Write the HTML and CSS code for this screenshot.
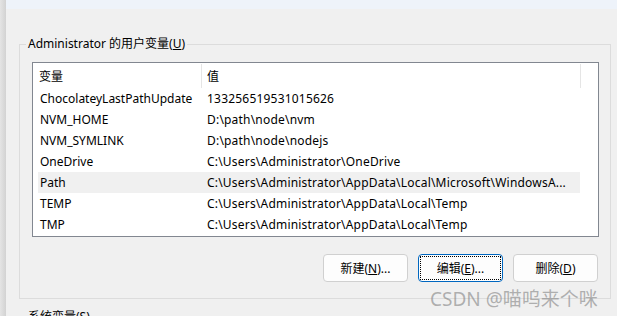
FILE: index.html
```html
<!DOCTYPE html>
<html lang="zh-CN">
<head>
    <meta charset="UTF-8">
    <title>环境变量</title>
    <link rel="stylesheet" href="styles.css">
</head>
<body>
    <div class="screen">
        <div class="edge"></div>
        <div class="main">
            <div class="topband"></div>
            <div class="pane">
                <fieldset class="group">
                    <legend>Administrator 的用户变量(<u>U</u>)</legend>

                    <div class="listbox">
                        <div class="head">
                            <div class="hcell first">变量</div>
                            <div class="hcell">值</div>
                            <div class="hcell last"></div>
                        </div>
                        <div class="rows">
                            <div class="row"><span>ChocolateyLastPathUpdate</span><span>133256519531015626</span></div>
                            <div class="row"><span>NVM_HOME</span><span>D:\path\node\nvm</span></div>
                            <div class="row"><span>NVM_SYMLINK</span><span>D:\path\node\nodejs</span></div>
                            <div class="row"><span>OneDrive</span><span>C:\Users\Administrator\OneDrive</span></div>
                            <div class="row selected"><span>Path</span><span>C:\Users\Administrator\AppData\Local\Microsoft\WindowsA...</span></div>
                            <div class="row"><span>TEMP</span><span>C:\Users\Administrator\AppData\Local\Temp</span></div>
                            <div class="row"><span>TMP</span><span>C:\Users\Administrator\AppData\Local\Temp</span></div>
                        </div>
                    </div>

                    <div class="actions">
                        <button type="button">新建(<u>N</u>)...</button>
                        <button type="button" class="focused">编辑(<u>E</u>)...</button>
                        <button type="button">删除(<u>D</u>)</button>
                    </div>
                </fieldset>

                <p class="next-title">系统变量(<u>S</u>)</p>
            </div>
        </div>
        <div class="watermark">CSDN @喵呜来个咪</div>
    </div>
</body>
</html>
```

FILE: styles.css
```css
body {
    margin: 0;
    background-color: #f0f0f0;
    font-family: 'Noto Sans', 'Noto Sans CJK SC', sans-serif;
    font-size: 12px;
    color: #000;
}

.screen {
    position: relative;
    display: flex;
    height: 316px;
    overflow: hidden;
}

.edge {
    width: 6px;
    flex-shrink: 0;
    background: linear-gradient(to right, #e4e4e4, #d2d2d2);
}

.main {
    flex: 1;
    display: flex;
    flex-direction: column;
    overflow: hidden;
}

.topband {
    height: 9px;
    flex-shrink: 0;
    background-color: #eef3fa;
}

.pane {
    flex-shrink: 0;
    padding: 27px 6px 0 13px;
}

.group {
    margin: 0;
    padding: 0 11px 16px 12px;
    border: 1px solid #dcdcdc;
}

.group legend {
    margin-left: -6px;
    padding: 0 2px;
    line-height: 16px;
}

.listbox {
    margin-top: 10px;
    border: 1px solid #828790;
    background-color: #fff;
    padding-bottom: 1px;
}

.head {
    display: grid;
    grid-template-columns: 169px 379px 1fr;
    height: 25px;
}

.hcell {
    display: flex;
    align-items: center;
    padding-left: 5px;
    border-right: 1px solid #e5e5e5;
    margin: 1px 0 0;
}

.hcell.first {
    padding-left: 6px;
}

.hcell.last {
    border-right: none;
}

.rows {
    margin-left: 5px;
    width: 542px;
}

.row {
    display: grid;
    grid-template-columns: 167px 1fr;
    height: 21px;
    align-items: center;
    white-space: nowrap;
}

.row span {
    padding-left: 2px;
    overflow: hidden;
}

.row span + span {
    letter-spacing: 0.2px;
}

.row.selected {
    background-color: #f0f0f0;
}

.actions {
    display: flex;
    justify-content: flex-end;
    gap: 10px;
    margin-top: 17px;
    padding-right: 1px;
}

.actions button {
    position: relative;
    width: 85px;
    height: 28px;
    padding: 0;
    border: 1px solid #d0d0d0;
    border-radius: 4px;
    background-color: #fdfdfd;
    font-family: inherit;
    font-size: 12px;
    color: #000;
}

.actions button.focused {
    border-color: #0067c0;
}

.actions button.focused::after {
    content: "";
    position: absolute;
    inset: 1px;
    border: 1px dotted #000;
}

.next-title {
    margin: 10px 0 0 9px;
    line-height: 16px;
}

.watermark {
    position: absolute;
    left: 430px;
    top: 284px;
    font-size: 19px;
    color: rgba(130, 130, 130, 0.6);
    white-space: nowrap;
}
```
